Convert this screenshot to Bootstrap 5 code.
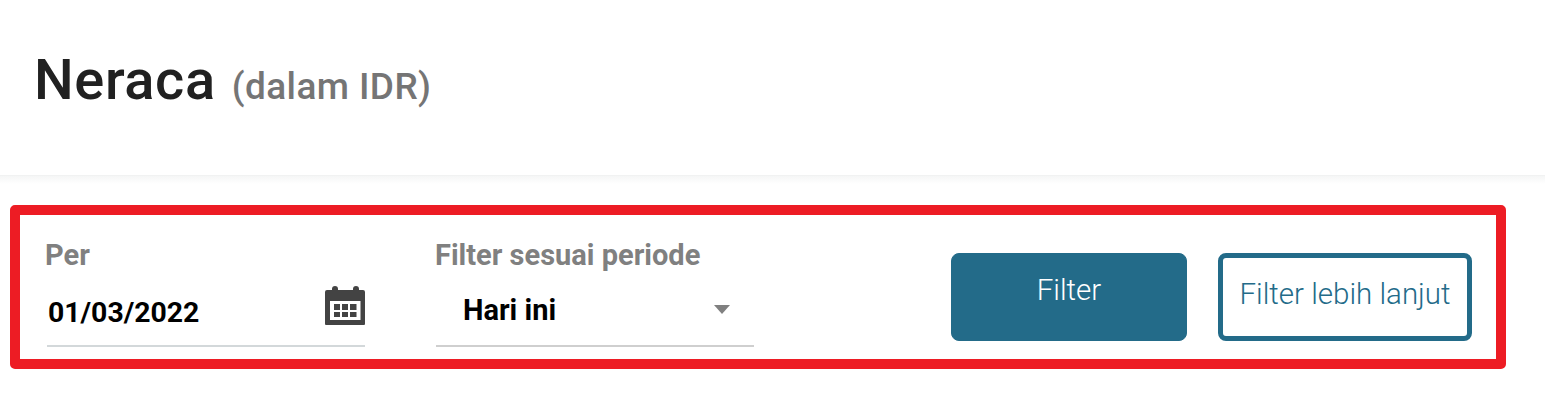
<!DOCTYPE html>
<html lang="id">
<head>
<meta charset="utf-8">
<title>Neraca</title>
<link href="https://cdn.jsdelivr.net/npm/bootstrap@5.3.0/dist/css/bootstrap.min.css" rel="stylesheet">
<style>
html,body{height:407px;overflow:hidden;background:#fff;}
body{font-family:Roboto,"Liberation Sans",sans-serif;}
.page-head{height:176px;padding:0 34px 16px;border-bottom:1px solid #f1f2f2;}
.head-shadow{height:8px;background:linear-gradient(#f5f6f6,#fff);}
.page-title{font-size:56px;font-weight:500;color:#212121;line-height:1;margin:0;letter-spacing:.6px;}
.page-sub{font-size:37px;font-weight:500;color:#757575;margin-left:16px;letter-spacing:.4px;}
.filter-box{width:1496px;height:164px;margin:21px 0 0 10px;border:10px solid #ed1c24;border-radius:5px;padding:25px 24px 0 27px;}
.field-col{width:318px;}
.field-col-b{width:318px;margin-left:71px;}
.field-lbl{font-size:29px;font-weight:700;color:#808080;line-height:30px;margin:0 0 12px -2px;}
.field-col-b .field-lbl{margin-left:-1px;}
.field-line{height:65px;border-bottom:2px solid #d3d8da;font-size:28.400px;font-weight:700;color:#000;line-height:40px;padding-left:1px;}
.field-value{margin-top:11px;}
.field-icon{margin-top:4px;}
.field-line-b{border-bottom-color:#cfcfcf;padding-left:27px;padding-right:24px;font-size:29px;line-height:36px;}
.field-line-b .field-value{margin-top:10px;}
.caret-shape{width:0;height:0;margin-top:23px;border-left:8px solid transparent;border-right:8px solid transparent;border-top:9px solid #808080;}
.act-btn{height:88px;margin-top:13px;font-size:29.500px;font-weight:300;border-radius:8px;line-height:1;white-space:nowrap;}
.act-solid{width:236px;background:#236b89;border:1px solid #236b89;color:#fff;padding:0 0 12px;}
.act-outline{width:254px;margin-left:31px;background:#fff;border:5px solid #236b89;color:#236b89;padding:0 0 5px;}
</style>
</head>
<body>
<header class="page-head d-flex align-items-center">
  <h1 class="page-title">Neraca<span class="page-sub">(dalam IDR)</span></h1>
</header>
<div class="head-shadow"></div>
<section class="filter-box d-flex align-items-start">
  <div class="field-col">
    <div class="field-lbl">Per</div>
    <div class="field-line d-flex justify-content-between align-items-start">
      <span class="field-value">01/03/2022</span>
      <svg class="field-icon" width="40" height="39" viewBox="0 0 40 39" aria-hidden="true"><path fill="#434343" fill-rule="evenodd" d="M2 4h5V3a3 3 0 0 1 6 0v1h15V3a3 3 0 0 1 6 0v1h4a2 2 0 0 1 2 2v32a1 1 0 0 1-1 1H1a1 1 0 0 1-1-1V6a2 2 0 0 1 2-2zM5 15v19h30.500V15zM9 18h6v6H9zM17 18h6v6H17zM25 18h6.500v6H25zM9 26h6v5H9zM17 26h6v5H17zM25 26h6.500v5H25z"/></svg>
    </div>
  </div>
  <div class="field-col-b">
    <div class="field-lbl">Filter sesuai periode</div>
    <div class="field-line field-line-b d-flex justify-content-between align-items-start">
      <span class="field-value">Hari ini</span>
      <span class="caret-shape"></span>
    </div>
  </div>
  <button type="button" class="btn act-btn act-solid ms-auto">Filter</button>
  <button type="button" class="btn act-btn act-outline">Filter lebih lanjut</button>
</section>
<script src="https://cdn.jsdelivr.net/npm/bootstrap@5.3.0/dist/js/bootstrap.bundle.min.js"></script>
</body>
</html>
